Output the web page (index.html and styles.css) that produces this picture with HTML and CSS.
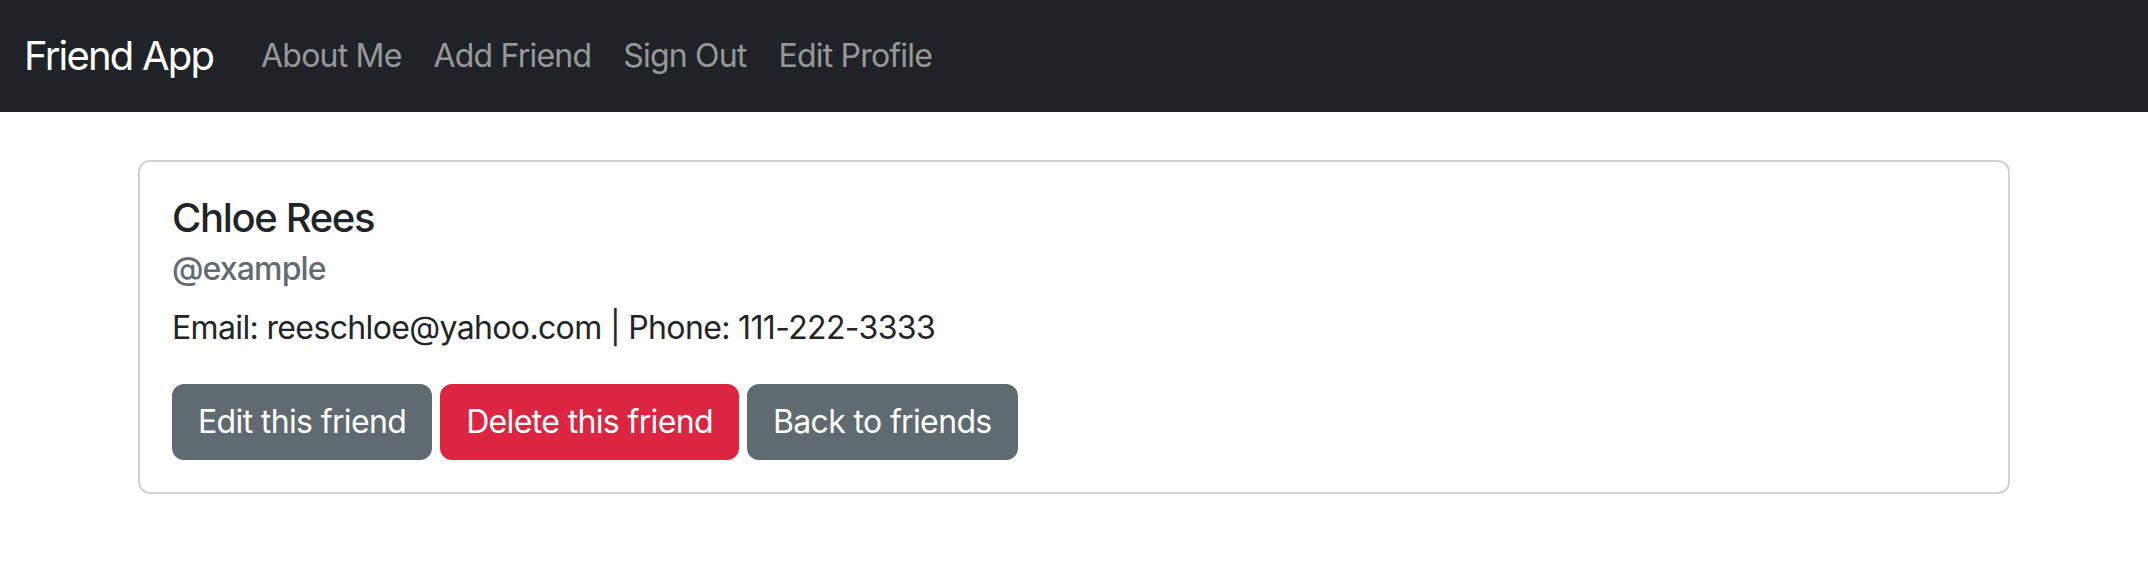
FILE: index.html
```html
<!DOCTYPE html>
<html lang="en">
<head>
<meta charset="utf-8">
<title>Friend App</title>
<link rel="stylesheet" href="styles.css">
</head>
<body>
<nav class="navbar">
  <div class="navbar-inner">
    <a class="brand" href="#">Friend App</a>
    <ul class="nav">
      <li><a class="nav-link" href="#">About Me</a></li>
      <li><a class="nav-link" href="#">Add Friend</a></li>
      <li><a class="nav-link" href="#">Sign Out</a></li>
      <li><a class="nav-link" href="#">Edit Profile</a></li>
    </ul>
  </div>
</nav>
<main class="container">
  <div class="card">
    <div class="card-body">
      <h5 class="card-title">Chloe Rees</h5>
      <h6 class="card-subtitle">@example</h6>
      <p class="card-text">Email: reeschloe@yahoo.com | Phone: 111-222-3333</p>
      <div class="actions">
        <a class="btn btn-secondary" href="#">Edit this friend</a>
        <a class="btn btn-danger" href="#">Delete this friend</a>
        <a class="btn btn-secondary" href="#">Back to friends</a>
      </div>
    </div>
  </div>
</main>
</body>
</html>
```
FILE: styles.css
```css
* { box-sizing: border-box; }
body {
  margin: 0;
  font-family: Inter, "Noto Sans", sans-serif;
  font-size: 32px;
  line-height: 1.5;
  letter-spacing: -0.02em;
  color: #212529;
  background: #fff;
}
a { text-decoration: none; }

.navbar {
  background: #1f2226;
  padding: 16px 0;
}
.navbar-inner {
  display: flex;
  align-items: center;
  padding: 0 24px;
}
.brand {
  color: #fff;
  font-size: 40px;
  line-height: 60px;
  letter-spacing: -0.045em;
  padding: 10px 0;
  margin-right: 32px;
}
.nav {
  display: flex;
  list-style: none;
  margin: 0;
  padding: 0;
}
.nav-link {
  display: block;
  padding: 16px;
  color: rgba(255, 255, 255, 0.55);
  line-height: 48px;
  letter-spacing: -0.025em;
}

.container {
  width: 1920px;
  margin: 48px auto 0;
  padding: 0 24px;
}
.card {
  border: 2px solid rgba(0, 0, 0, 0.175);
  border-radius: 12px;
}
.card-body {
  padding: 32px;
}
.card-title {
  margin: 0 0 16px;
  font-size: 40px;
  font-weight: 500;
  line-height: 1.2;
  letter-spacing: -0.034em;
}
.card-subtitle {
  margin: -8px 0 16px;
  font-size: 32px;
  font-weight: 500;
  line-height: 1.2;
  letter-spacing: -0.027em;
  color: #626b72;
}
.card-text {
  margin: 0 0 32px;
}
.actions {
  display: flex;
  gap: 8px;
}
.btn {
  display: inline-block;
  padding: 12px 24px;
  border: 2px solid transparent;
  border-radius: 12px;
  color: #fff;
  font-size: 32px;
  line-height: 48px;
}
.btn-secondary { background: #606a71; border-color: #606a71; }
.btn-danger { background: #dc2540; border-color: #dc2540; }
```
